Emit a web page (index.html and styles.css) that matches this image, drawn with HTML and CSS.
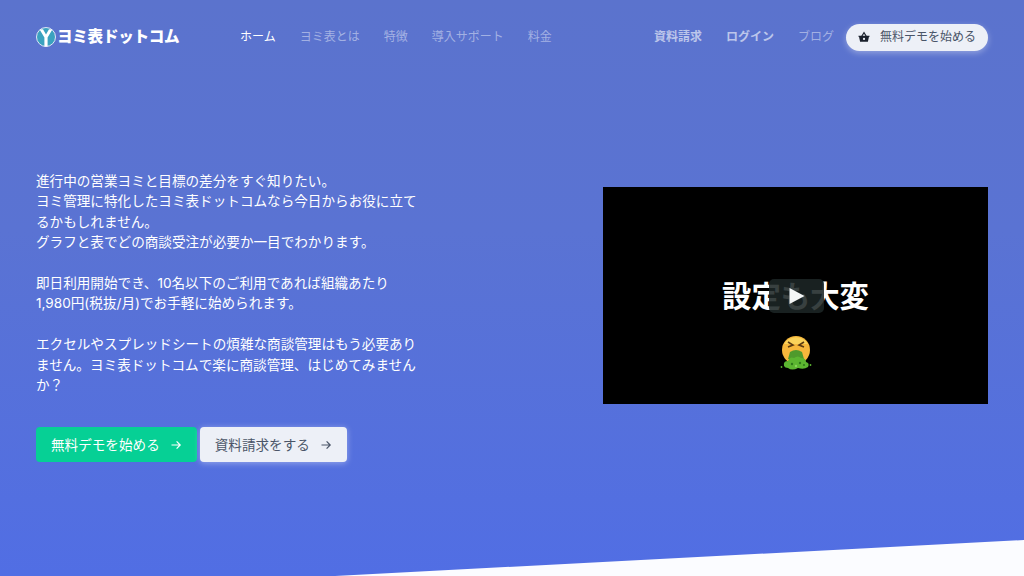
FILE: index.html
```html
<!DOCTYPE html>
<html lang="ja">
<head>
  <meta charset="UTF-8">
  <meta name="viewport" content="width=device-width, initial-scale=1.0">
  <title>ヨミ表ドットコム</title>
  <link rel="stylesheet" href="styles.css">
</head>
<body>
  <div class="page">
    <header class="nav">
      <a class="logo" href="#">
        <svg class="logo-mark" viewBox="0 0 20 20" width="20" height="20">
          <circle cx="10" cy="10" r="9.5" fill="#3aa2bf" stroke="#dfe6f5" stroke-width="1"/>
          <path d="M3.6 2.6 L7 2.2 L10 7.6 L13 2.2 L16.4 2.6 L11.6 10.6 L11.6 19.4 L8.4 19.4 L8.4 10.6 Z" fill="#fff"/>
        </svg>
        <span class="logo-text">ヨミ表ドットコム</span>
      </a>

      <nav class="nav-main">
        <a class="nav-link active" href="#">ホーム</a>
        <a class="nav-link" href="#">ヨミ表とは</a>
        <a class="nav-link" href="#">特徴</a>
        <a class="nav-link" href="#">導入サポート</a>
        <a class="nav-link" href="#">料金</a>
      </nav>

      <div class="nav-side">
        <a class="nav-link strong" href="#">資料請求</a>
        <a class="nav-link strong" href="#">ログイン</a>
        <a class="nav-link" href="#">ブログ</a>
        <a class="pill" href="#">
          <svg viewBox="0 0 16 16" width="12" height="12">
            <path d="M5 7 L8 2.2 L11 7" fill="none" stroke="#1a202c" stroke-width="1.5"/>
            <path d="M0.6 6.2 H15.4 V7.8 H14.6 L13.2 14.4 H2.8 L1.4 7.8 H0.6 Z" fill="#1a202c"/>
            <circle cx="8" cy="10.6" r="1.5" fill="#edf0f7"/>
          </svg>
          <span>無料デモを始める</span>
        </a>
      </div>
    </header>

    <main class="hero">
      <section class="hero-copy">
        <p>進行中の営業ヨミと目標の差分をすぐ知りたい。<br>ヨミ管理に特化したヨミ表ドットコムなら今日からお役に立てるかもしれません。<br>グラフと表でどの商談受注が必要か一目でわかります。</p>
        <p>即日利用開始でき、10名以下のご利用であれば組織あたり1,980円(税抜/月)でお手軽に始められます。</p>
        <p>エクセルやスプレッドシートの煩雑な商談管理はもう必要ありません。ヨミ表ドットコムで楽に商談管理、はじめてみませんか？</p>
        <div class="actions">
          <a class="btn btn-green" href="#">無料デモを始める
            <svg viewBox="0 0 12 12" width="12" height="12"><path d="M1.5 6 H10 M6.6 2.4 L10.2 6 L6.6 9.6" fill="none" stroke="currentColor" stroke-width="1.2"/></svg>
          </a>
          <a class="btn btn-light" href="#">資料請求をする
            <svg viewBox="0 0 12 12" width="12" height="12"><path d="M1.5 6 H10 M6.6 2.4 L10.2 6 L6.6 9.6" fill="none" stroke="currentColor" stroke-width="1.2"/></svg>
          </a>
        </div>
      </section>

      <section class="video">
        <div class="video-title">設定も大変</div>
        <svg class="video-emoji" viewBox="0 0 32 36" width="32" height="36">
          <circle cx="16" cy="15" r="14" fill="#f6b73c"/>
          <path d="M4 9 A14 14 0 0 1 28 9 Z" fill="#fbd35a"/>
          <path d="M8 7 L13 10 L8 12 M24 7 L19 10 L24 12" fill="none" stroke="#5a3a12" stroke-width="1.6"/>
          <path d="M10 17 Q16 13 22 17 L24 24 H8 Z" fill="#4f9a2c"/>
          <path d="M4 31 Q3 26 8 26 Q10 21 14 23 Q18 20 21 23 Q26 23 26 27 Q30 28 28 32 Q24 35 18 33 Q12 36 8 33 Q5 33 4 31 Z" fill="#5cb531"/>
          <circle cx="12" cy="29" r="1.2" fill="#2f7a1b"/>
          <circle cx="20" cy="28" r="1.2" fill="#2f7a1b"/>
          <circle cx="16" cy="31" r="1.2" fill="#8bd65a"/>
          <circle cx="24" cy="30" r="1.1" fill="#2f7a1b"/>
          <circle cx="1.5" cy="32" r="0.9" fill="#5cb531"/>
          <circle cx="30.5" cy="30" r="0.9" fill="#5cb531"/>
        </svg>
        <div class="play">
          <svg viewBox="0 0 16 18" width="16" height="18"><path d="M0.5 1 L15.5 9 L0.5 17 Z" fill="#f4f6f6"/></svg>
        </div>
      </section>
    </main>

    <!-- white wedge at the bottom of the hero -->
    <svg class="wedge" viewBox="0 0 1024 576" width="1024" height="576">
      <polygon points="335,576 1024,540 1024,576" fill="#fbfcff"/>
    </svg>
  </div>
</body>
</html>
```

FILE: styles.css
```css
* {
  box-sizing: border-box;
}

html, body {
  margin: 0;
  padding: 0;
}

body {
  font-family: "Inter", "Noto Sans CJK JP", sans-serif;
  font-size: 13.6px;
  line-height: 1.5;
  color: #fff;
}

a {
  color: inherit;
  text-decoration: none;
}

.page {
  position: relative;
  width: 1024px;
  height: 576px;
  overflow: hidden;
  padding: 0 36px;
  background: linear-gradient(180deg, #5b73cd 0%, #5a73d3 40%, #516ee4 100%);
}

/* Header */
.nav {
  display: flex;
  align-items: center;
  height: 74px;
}

.logo {
  display: flex;
  align-items: center;
  width: 204px;
}

.logo-mark {
  flex: none;
}

.logo-text {
  margin-left: 1px;
  font-size: 15.6px;
  font-weight: 900;
  letter-spacing: -0.3px;
  white-space: nowrap;
}

.nav-main {
  display: flex;
  gap: 24px;
}

.nav-side {
  display: flex;
  align-items: center;
  gap: 24px;
  margin-left: auto;
}

.nav-link {
  font-size: 12px;
  color: rgba(255, 255, 255, 0.45);
}

.nav-link.active {
  color: #fff;
}

.nav-link.strong {
  font-weight: 700;
  color: rgba(255, 255, 255, 0.6);
}

.nav-side .pill {
  margin-left: -12px;
}

.pill {
  display: flex;
  align-items: center;
  gap: 10px;
  height: 27px;
  padding: 0 12px;
  border-radius: 14px;
  background-color: #edf0f7;
  color: #4a5568;
  font-size: 12px;
  box-shadow: 0 2px 6px rgba(255, 255, 255, 0.35);
}

/* Hero */
.hero {
  display: flex;
  justify-content: space-between;
  align-items: center;
  padding-top: 97px;
}

.hero-copy {
  width: 383px;
}

.hero-copy p {
  margin: 0 0 20.4px;
}

.actions {
  display: flex;
  gap: 3px;
  margin-top: 32px;
}

.btn {
  display: flex;
  align-items: center;
  gap: 10px;
  height: 35px;
  padding: 0 15px;
  border-radius: 4px;
}

.btn-green {
  background-color: #06d095;
  color: #fff;
}

.btn-light {
  background-color: #edf0f7;
  color: #4a5568;
  box-shadow: 0 1px 6px rgba(255, 255, 255, 0.4);
}

/* Video */
.video {
  position: relative;
  display: flex;
  flex-direction: column;
  align-items: center;
  width: 385px;
  height: 217px;
  margin-top: -43px;
  padding-top: 88px;
  background-color: #000;
}

.video-title {
  font-size: 29.4px;
  font-weight: 700;
  line-height: 44px;
  white-space: nowrap;
}

.video-emoji {
  margin-top: 16px;
}

.play {
  position: absolute;
  left: 166px;
  top: 92px;
  width: 55px;
  height: 34px;
  display: flex;
  align-items: center;
  justify-content: center;
  border-radius: 5px;
  background-color: rgba(28, 38, 38, 0.88);
}

.wedge {
  position: absolute;
  left: 0;
  top: 0;
  pointer-events: none;
}
```
